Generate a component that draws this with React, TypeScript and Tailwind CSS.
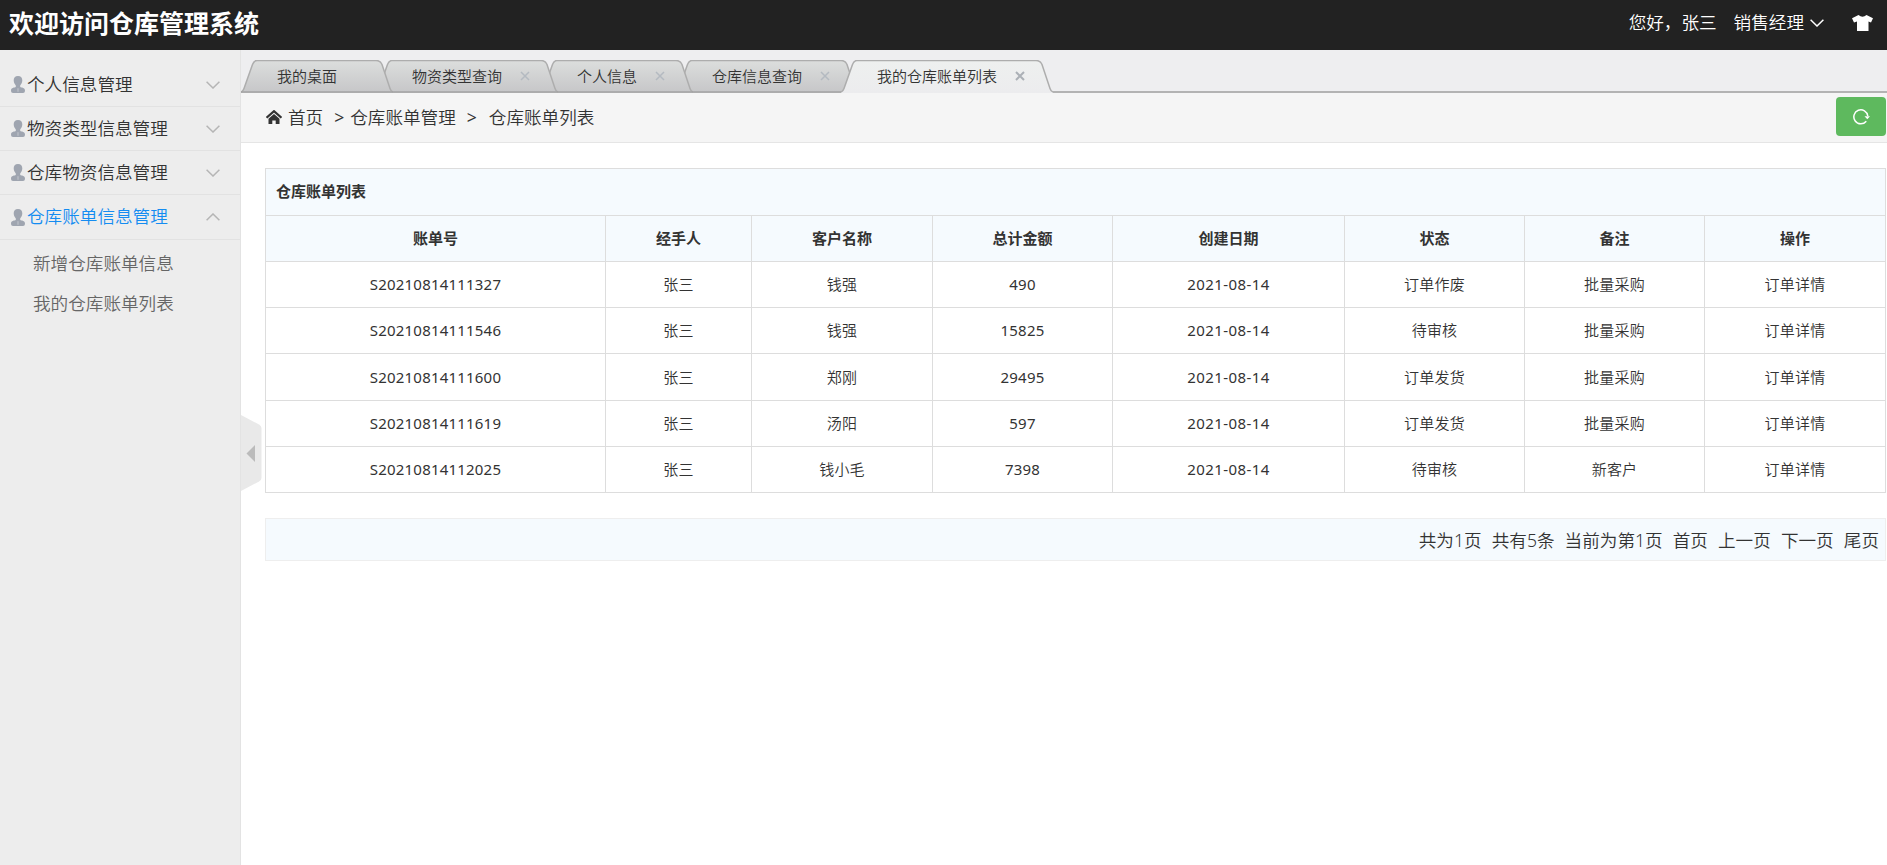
import React, { useState } from 'react';
import clsx from 'clsx';

const menus = [
  { name: '个人信息管理', children: [] },
  { name: '物资类型信息管理', children: [] },
  { name: '仓库物资信息管理', children: [] },
  { name: '仓库账单信息管理', children: ['新增仓库账单信息', '我的仓库账单列表'] },
];

// width of each tab, neighbours overlap by 17px
const tabs = [
  { name: '我的桌面', width: 152, closable: false },
  { name: '物资类型查询', width: 182, closable: true },
  { name: '个人信息', width: 152, closable: true },
  { name: '仓库信息查询', width: 182, closable: true },
  { name: '我的仓库账单列表', width: 212, closable: true },
];

const columns = ['账单号', '经手人', '客户名称', '总计金额', '创建日期', '状态', '备注', '操作'];

const bills = [
  ['S20210814111327', '张三', '钱强', '490', '2021-08-14', '订单作废', '批量采购', '订单详情'],
  ['S20210814111546', '张三', '钱强', '15825', '2021-08-14', '待审核', '批量采购', '订单详情'],
  ['S20210814111600', '张三', '郑刚', '29495', '2021-08-14', '订单发货', '批量采购', '订单详情'],
  ['S20210814111619', '张三', '汤阳', '597', '2021-08-14', '订单发货', '批量采购', '订单详情'],
  ['S20210814112025', '张三', '钱小毛', '7398', '2021-08-14', '待审核', '新客户', '订单详情'],
];

const pager = ['共为1页', '共有5条', '当前为第1页', '首页', '上一页', '下一页', '尾页'];

const UserIcon = () => (
  <svg className="w-[14px] h-[17px] shrink-0" viewBox="0 0 14 17">
    <path d="M7 0C4 0 2.600 2 2.700 4.600 2.800 7 4 8.600 4.800 9.400v1.500C3.400 11.500 0 11.500 0 14.500 0 16.200 .8 17 2 17h10c1.200 0 2-.8 2-2.500 0-3-3.400-3-4.800-3.600V9.400c.8-.8 2-2.400 2.100-4.800C11.400 2 10 0 7 0z" fill="#9fa5b0" />
    <path d="M7 12.200v3.600" stroke="#c3c7ce" strokeWidth="1" />
  </svg>
);

const Chevron = ({ className, up }: { className: string; up?: boolean }) => (
  <svg className={clsx('w-[14px] h-2', className)} viewBox="0 0 14 8" fill="none" stroke="currentColor" strokeWidth="1.5">
    <path d={up ? 'M.6 7.300 7 1l6.400 6.300' : 'M.6.7 7 7 13.400.7'} />
  </svg>
);

const TabShape = ({ width, active }: { width: number; active: boolean }) => {
  const w = width;
  const outline = `M0 32C2 31 2.500 30 3 28.500L11.500 4.500Q13 .5 16 .5H${w - 17}Q${w - 12.5} .5 ${w - 11} 4.500L${w - 3} 28.500Q${w - 2} 31.500 ${w} 32`;
  return (
    <svg className="absolute left-0 top-0 h-[33px] w-full" viewBox={`0 0 ${w} 33`}>
      <defs>
        <linearGradient id={`tab${w}${active}`} x1="0" y1="0" x2="0" y2="1">
          <stop offset="0" stopColor={active ? '#eef0ef' : '#dcdedd'} />
          <stop offset="1" stopColor={active ? '#ececee' : '#c6c6c8'} />
        </linearGradient>
      </defs>
      <path d={`${outline}V33H0z`} fill={`url(#tab${w}${active})`} />
      <path d={outline} fill="none" stroke="#adadad" strokeWidth="1.500" />
      {!active && <path d={`M0 32H${w}`} stroke="#a3a3a3" strokeWidth="1.500" />}
    </svg>
  );
};

const App = () => {
  const [activeTab, setActiveTab] = useState(4);
  const [openMenu, setOpenMenu] = useState(3);

  return (
    <div className="flex flex-col h-screen w-full overflow-hidden bg-white text-[#333] font-['Noto_Sans','Noto_Sans_CJK_SC',sans-serif] font-[350] text-[17.6px] leading-6">
      <header className="flex h-[50px] shrink-0 items-center justify-between bg-[#222] text-white">
        <h1 className="pl-[9px] pb-[5px] text-[25px] font-bold">欢迎访问仓库管理系统</h1>
        <div className="flex items-center pr-[14px] pb-[5px]">
          <span className="pb-[2px]">您好，张三</span>
          <span className="ml-[17px] pb-[2px]">销售经理</span>
          <Chevron className="ml-[6px]" />
          <svg className="ml-[28px] w-[21px] h-[16px]" viewBox="0 0 21 16" fill="#fff">
            <path d="M6.500 0 0 3.200l2 4.300 3-1V16h11.500V6.500l2.500 1 2-4.300L14.500 0q-4 3.500-8 0z" />
          </svg>
        </div>
      </header>

      <div className="flex min-h-0 flex-1">
        <aside className="w-[241px] shrink-0 border-r border-[#e3e3e3] bg-[#ededed] pt-[13px]">
          {menus.map((menu, i) => (
            <div key={menu.name}>
              <button
                className={clsx(
                  'flex w-full items-center border-b border-[#e2e2e2] pl-[11px] pr-[20px]',
                  openMenu === i ? 'h-[45px] text-[#148cf1]' : 'h-11'
                )}
                onClick={() => setOpenMenu(i)}
              >
                <UserIcon />
                <span className="ml-[2px] pb-[2px]">{menu.name}</span>
                <Chevron className="ml-auto text-[#b5b5b5]" up={openMenu === i} />
              </button>
              {openMenu === i && (
                <ul className="pt-[3px] text-[#666]">
                  {menu.children.map((item) => (
                    <li key={item} className="flex h-10 items-center pl-[33px]">{item}</li>
                  ))}
                </ul>
              )}
            </div>
          ))}
        </aside>

        <main className="relative min-w-0 flex-1">
          <nav className="flex h-[43px] items-end border-b-2 border-[#b3b3b3] bg-[#eeeef0]">
            {tabs.map((tab, i) => (
              <div
                key={tab.name}
                className="relative -mr-[17px] -mb-[2px] h-[33px] shrink-0 cursor-pointer"
                style={{ width: tab.width, zIndex: activeTab === i ? 10 : 9 - i }}
                onClick={() => setActiveTab(i)}
              >
                <TabShape width={tab.width} active={activeTab === i} />
                <div className="relative flex h-8 items-center justify-between pl-9 pr-[28px] text-[15px]">
                  <span>{tab.name}</span>
                  {tab.closable && (
                    <svg
                      className={clsx('size-[10px]', activeTab === i ? 'text-[#abb0b6]' : 'text-[#b4bac1]')}
                      viewBox="0 0 10 10"
                      stroke="currentColor"
                      strokeWidth={activeTab === i ? 2 : 1.5}
                    >
                      <path d="M1 1l8 8M9 1 1 9" />
                    </svg>
                  )}
                </div>
              </div>
            ))}
          </nav>

          <div className="flex h-[50px] items-center border-b border-[#e5e5e5] bg-[#f5f5f5] pb-[2px] pl-[25px] pr-[1px]">
            <svg className="w-4 h-[14px]" viewBox="0 0 16 14">
              <path d="M.6 7.800 8 1.200l7.400 6.600" fill="none" stroke="#333" strokeWidth="2.200" />
              <path d="M2.500 8.700 8 3.900l5.500 4.800V14H9.700v-3.500H6.300V14H2.500z" fill="#333" />
            </svg>
            <span className="ml-[6px]">首页</span>
            <span className="ml-[11px] w-[16px] font-normal">&gt;</span>
            <span>仓库账单管理</span>
            <span className="ml-[11px] w-[22px] font-normal">&gt;</span>
            <span>仓库账单列表</span>
            <button className="ml-auto flex h-[39px] w-[50px] items-center justify-center rounded bg-[#5eb95e] text-white">
              <svg className="w-[17px] h-4" viewBox="0 0 17 16">
                <path d="M13.300 12.200A7 7 0 1 1 14.800 7" fill="none" stroke="currentColor" strokeWidth="1.500" />
                <path d="M11.500 7.200H17l-2.700 3z" fill="currentColor" />
              </svg>
            </button>
          </div>

          <section className="pl-6 pt-[25px]">
            <table className="w-[1621px] table-fixed border-collapse text-center text-[15px] tracking-[0.2px]">
              <colgroup>
                <col className="w-[340px]" />
                <col className="w-[146px]" />
                <col className="w-[181px]" />
                <col className="w-[180px]" />
                <col className="w-[232px]" />
                <col className="w-[180px]" />
                <col className="w-[180px]" />
                <col className="w-[181px]" />
              </colgroup>
              <thead className="bg-[#f5fafe]">
                <tr className="h-[47px]">
                  <th className="border border-[#ddd] pb-[2px] pl-[10px] text-left font-bold tracking-normal" colSpan={8}>仓库账单列表</th>
                </tr>
                <tr className="h-[46px]">
                  {columns.map((col) => (
                    <th key={col} className="border border-[#ddd] pb-[2px] font-bold tracking-normal">{col}</th>
                  ))}
                </tr>
              </thead>
              <tbody>
                {bills.map((bill, i) => (
                  <tr key={bill[0]} className={i === 2 ? 'h-[47px]' : 'h-[46px]'}>
                    {bill.map((value, j) => (
                      <td
                        key={j}
                        className={clsx(
                          'border border-[#ddd] pb-px',
                          (j === 0 || j === 3 || j === 4) && 'font-normal',
                          j === 4 && 'tracking-[0.4px]'
                        )}
                      >
                        {value}
                      </td>
                    ))}
                  </tr>
                ))}
              </tbody>
            </table>

            <div className="mt-[25px] flex h-[43px] w-[1621px] items-center justify-end gap-[10.100px] border border-[#eee] bg-[#f5fafe] pr-[6px]">
              {pager.map((item) => (
                <span key={item}>{item}</span>
              ))}
            </div>
          </section>

          {/* sidebar toggle */}
          <svg className="absolute left-0 top-[365px] h-[78px] w-[21px]" viewBox="0 0 21 78">
            <path d="M0 0 18 9.500Q20.500 11 20.500 13V63Q20.500 65 18 66.500L0 76z" fill="#e9e9e9" />
            <path d="M14 30V47L5.500 38.500z" fill="#bbb" />
          </svg>
        </main>
      </div>
    </div>
  );
};

export default App;
